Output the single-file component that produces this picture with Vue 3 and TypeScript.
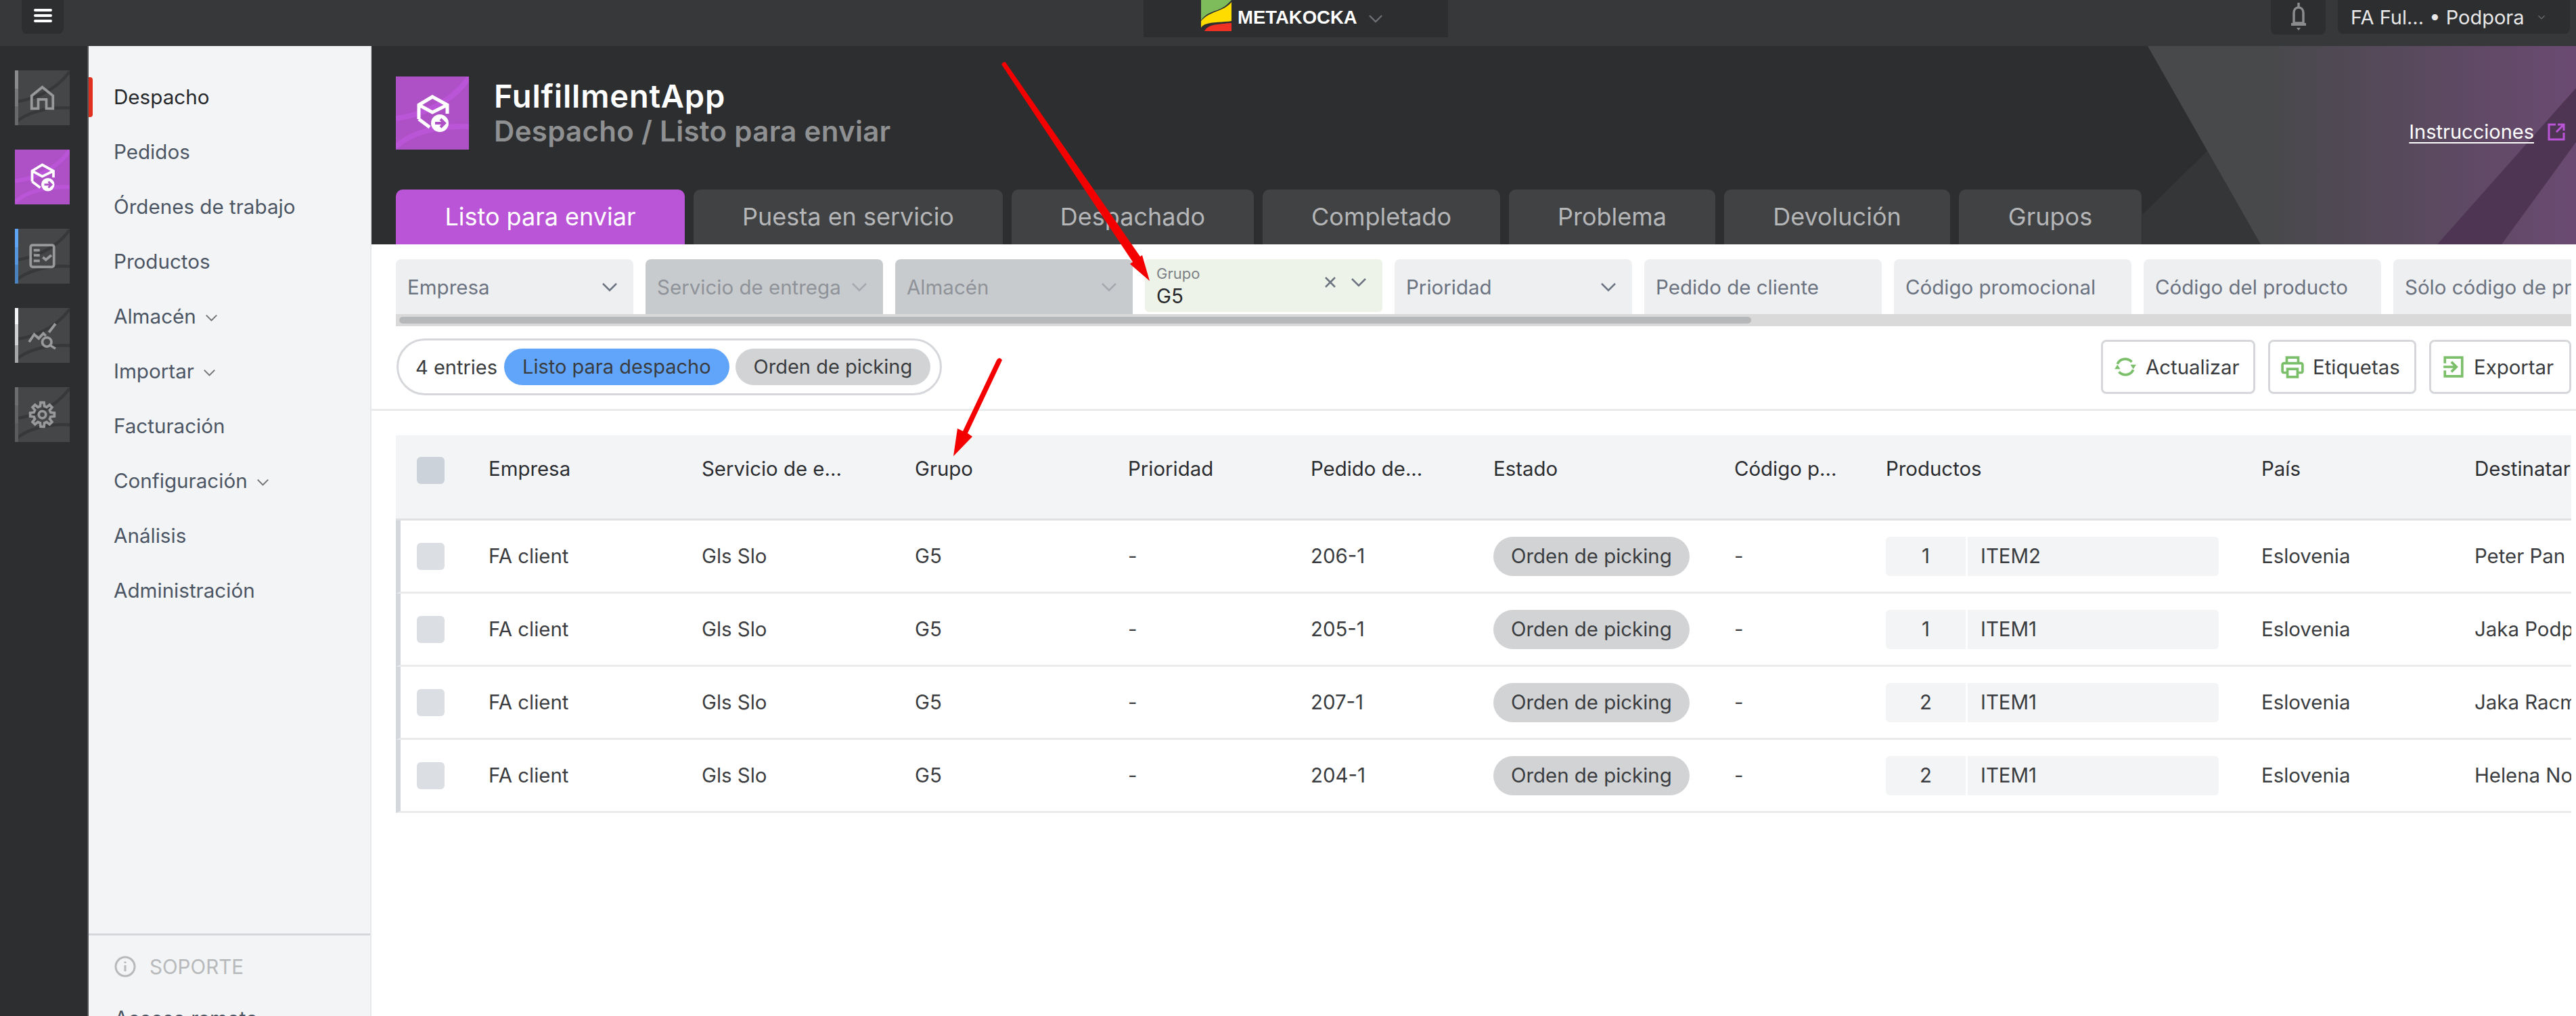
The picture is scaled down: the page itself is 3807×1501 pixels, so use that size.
<script setup lang="ts">
interface Tile {
  name: string;
  active?: boolean;
  strip: string;
}

const tiles: Tile[] = [
  { name: "home", strip: "linear-gradient(180deg, #8a8b8c 0 33%, #777879 33% 66%, #68696a 66%)" },
  { name: "box", active: true, strip: "transparent" },
  { name: "tasks", strip: "linear-gradient(180deg, #5ea6f5 0 33%, #5596de 33% 66%, #4a82c0 66%)" },
  { name: "chart", strip: "linear-gradient(180deg, #f4f4f4 0 30%, #cfd0d1 30% 68%, #a5a6a7 68%)" },
  { name: "gear", strip: "linear-gradient(180deg, #6c6d6e 0 33%, #626364 33% 66%, #5a5b5c 66%)" },
];

const menu = [
  { label: "Despacho", active: true },
  { label: "Pedidos" },
  { label: "Órdenes de trabajo" },
  { label: "Productos" },
  { label: "Almacén", sub: true },
  { label: "Importar", sub: true },
  { label: "Facturación" },
  { label: "Configuración", sub: true },
  { label: "Análisis" },
  { label: "Administración" },
];

const tabs = [
  { label: "Listo para enviar", width: 427 },
  { label: "Puesta en servicio", width: 457 },
  { label: "Despachado", width: 358 },
  { label: "Completado", width: 351 },
  { label: "Problema", width: 305 },
  { label: "Devolución", width: 334 },
  { label: "Grupos", width: 270 },
];

const filters = [
  { label: "Empresa", chevron: true },
  { label: "Servicio de entrega", chevron: true, disabled: true },
  { label: "Almacén", chevron: true, disabled: true },
  { label: "Grupo", value: "G5", chevron: true },
  { label: "Prioridad", chevron: true },
  { label: "Pedido de cliente" },
  { label: "Código promocional" },
  { label: "Código del producto" },
  { label: "Sólo código de producto" },
];

const columns = [
  "Empresa",
  "Servicio de e...",
  "Grupo",
  "Prioridad",
  "Pedido de...",
  "Estado",
  "Código p...",
  "Productos",
  "País",
  "Destinatario",
];

const rows = [
  { order: "206-1", qty: 1, item: "ITEM2", to: "Peter Pan" },
  { order: "205-1", qty: 1, item: "ITEM1", to: "Jaka Podpora" },
  { order: "207-1", qty: 2, item: "ITEM1", to: "Jaka Racman" },
  { order: "204-1", qty: 2, item: "ITEM1", to: "Helena Novak" },
];

// gear outline for the settings tile
const gearPath = (() => {
  const teeth = 8;
  const pts: string[] = [];
  for (let i = 0; i < teeth; i++) {
    const a = (i / teeth) * Math.PI * 2;
    const step = (Math.PI * 2) / teeth;
    const at = (r: number, t: number) =>
      `${(54 + r * Math.cos(t)).toFixed(1)} ${(54 + r * Math.sin(t)).toFixed(1)}`;
    pts.push(at(17, a - step * 0.32), at(24, a - step * 0.18), at(24, a + step * 0.18), at(17, a + step * 0.32));
  }
  return "M" + pts.join("L") + "Z";
})();
</script>

<template>
  <div class="page">
    <header class="topbar">
      <button class="burger">
        <span></span><span></span><span></span>
      </button>
      <div class="brand">
        <svg class="brand-logo" viewBox="0 0 45 46">
          <rect width="45" height="46" fill="#2d2e30" />
          <path d="M0 0H45V0C38 8 32 12 24 15C14 18 5 22 0 30Z" fill="#7dbb5b" />
          <path d="M0 31C6 24 14 20 25 16C33 13 40 9 45 3V31C34 33 16 32 6 36C3 37 1 39 0 41Z" fill="#ffdc00" />
          <path d="M5 46C8 40 14 37 24 36C32 35 40 34 45 34V46Z" fill="#ee3124" />
        </svg>
        <span class="brand-name">METAKOCKA</span>
        <svg class="chev brand-chev" viewBox="0 0 22 14"><path d="M1 2L11 12L21 2" /></svg>
      </div>
      <button class="bell">
        <svg viewBox="0 0 30 50" width="30" height="50">
          <path d="M15 4V10M8 34V19C8 14 11 11 15 11C19 11 22 14 22 19V34Z" fill="none" stroke="#8b8c8d" stroke-width="3.5" />
          <path d="M4 34H26V38H4ZM12 41H18L15 45Z" fill="#8b8c8d" />
        </svg>
      </button>
      <div class="user">
        <span>FA Ful... • Podpora</span>
        <svg class="chev user-chev" viewBox="0 0 22 14"><path d="M1 2L11 12L21 2" /></svg>
      </div>
    </header>

    <div class="body">
      <nav class="rail">
        <div v-for="t in tiles" :key="t.name" class="tile" :class="{ 'tile-active': t.active }">
          <i class="tile-strip" :style="{ background: t.strip }"></i>
          <svg viewBox="0 0 108 108" preserveAspectRatio="none">
            <path class="swoosh" d="M0 62C30 58 78 44 108 2" />
            <path class="swoosh" d="M0 104C20 84 60 72 108 74" />
            <g v-if="t.name === 'home'" class="glyph">
              <path d="M33 75V50L54 33L75 50V75H62V57H46V75Z" />
            </g>
            <g v-else-if="t.name === 'box'" class="glyph glyph-white">
              <path d="M34 63V42L54 30L76 42V55M34 42L54 53L76 42M34 63L50 75" />
              <circle class="dot" cx="65" cy="69" r="13" />
              <path class="dot-arrow" d="M58 69H71M66 63L72 69L66 75" />
            </g>
            <g v-else-if="t.name === 'tasks'" class="glyph">
              <rect x="31" y="32" width="46" height="43" rx="4" />
              <path d="M37 42H49M37 52H49M37 63H49M55 56L61 61L72 52" />
            </g>
            <g v-else-if="t.name === 'chart'" class="glyph">
              <path d="M28 67L38 52L47 60L56 50L61 55M67 48L80 31" />
              <circle cx="63" cy="67" r="9" />
              <path d="M70 74L80 80" />
            </g>
            <g v-else class="glyph">
              <path :d="gearPath" />
              <circle cx="54" cy="54" r="7" />
            </g>
          </svg>
        </div>
      </nav>

      <aside class="sidebar">
        <ul class="menu">
          <li v-for="m in menu" :key="m.label" class="menu-item" :class="{ 'menu-active': m.active }">
            {{ m.label }}
            <svg v-if="m.sub" class="chev menu-chev" viewBox="0 0 22 14"><path d="M1 2L11 12L21 2" /></svg>
          </li>
        </ul>
        <div class="support">
          <div class="support-title">
            <svg viewBox="0 0 32 32" width="32" height="32">
              <circle cx="16" cy="16" r="14" fill="none" stroke="#b7b9bb" stroke-width="3" />
              <path d="M16 14V23M16 8.5V11" stroke="#b7b9bb" stroke-width="3" />
            </svg>
            SOPORTE
          </div>
          <div class="support-link">Acceso remoto</div>
        </div>
      </aside>

      <main class="main">
        <section class="hero">
          <svg class="hero-art" viewBox="0 0 700 293" preserveAspectRatio="none">
            <defs>
              <linearGradient id="fade" x1="0" y1="0" x2="1" y2="0">
                <stop offset="0.28" stop-color="#48494b" />
                <stop offset="1" stop-color="#6b4a72" />
              </linearGradient>
            </defs>
            <path d="M155 155L59 249V293H234Z" fill="#353638" />
            <path d="M67 0H700V293H234Z" fill="url(#fade)" />
            <path d="M700 62L495 293H590L700 142Z" fill="#4e3553" />
          </svg>
          <div class="hero-head">
            <div class="hero-logo">
              <svg viewBox="0 0 108 108">
                <path class="swoosh-p" d="M0 62C30 58 78 44 108 2" />
                <path class="swoosh-p" d="M0 104C20 84 60 72 108 74" />
                <g class="glyph glyph-white">
                  <path d="M34 63V42L54 30L76 42V55M34 42L54 53L76 42M34 63L50 75" />
                  <circle class="dot" cx="65" cy="69" r="13" />
                  <path class="dot-arrow" d="M58 69H71M66 63L72 69L66 75" />
                </g>
              </svg>
            </div>
            <div class="hero-text">
              <h1>FulfillmentApp</h1>
              <h2>Despacho / Listo para enviar</h2>
            </div>
            <a class="guide">
              <span>Instrucciones</span>
              <svg viewBox="0 0 26 26" width="26" height="26">
                <path d="M12 2H2V24H24V14M13 13L24 2M15 2H24V11" fill="none" stroke="#bb55d7" stroke-width="3" />
              </svg>
            </a>
          </div>
          <div class="tabs">
            <div
              v-for="(tab, i) in tabs"
              :key="tab.label"
              class="tab"
              :class="{ 'tab-active': i === 0 }"
              :style="{ width: tab.width + 'px' }"
            >
              {{ tab.label }}
            </div>
          </div>
        </section>

        <section class="filter-wrap">
          <div class="filters">
            <div
              v-for="f in filters"
              :key="f.label"
              class="filter"
              :class="{ 'filter-off': f.disabled, 'filter-set': f.value }"
            >
              <template v-if="f.value">
                <div class="filter-stack">
                  <small>{{ f.label }}</small>
                  <b>{{ f.value }}</b>
                </div>
                <svg class="clear" viewBox="0 0 18 18"><path d="M2 2L16 16M16 2L2 16" /></svg>
                <svg class="chev filter-chev set-chev" viewBox="0 0 22 14"><path d="M1 2L11 12L21 2" /></svg>
              </template>
              <template v-else>
                <span class="filter-label">{{ f.label }}</span>
                <svg v-if="f.chevron" class="chev filter-chev" viewBox="0 0 22 14"><path d="M1 2L11 12L21 2" /></svg>
              </template>
            </div>
          </div>
          <div class="scroll-track"><div class="scroll-thumb"></div></div>
        </section>

        <section class="toolbar">
          <div class="counts">
            <span class="count-text">4 entries</span>
            <span class="chip chip-blue">Listo para despacho</span>
            <span class="chip chip-grey">Orden de picking</span>
          </div>
          <div class="actions">
            <button class="action action-refresh">
              <svg viewBox="0 0 32 32" width="34" height="34" class="green">
                <path d="M5 12C8 5 18 2 25 9M27 20C24 27 14 30 7 23" />
                <path class="fill" d="M1 19L9 19L5 13ZM23 13L31 13L27 19Z" />
              </svg>
              Actualizar
            </button>
            <button class="action action-print">
              <svg viewBox="0 0 32 32" width="34" height="34" class="green">
                <path d="M8 11V3H24V11M8 24H4C3 24 2 23 2 22V13C2 12 3 11 4 11H28C29 11 30 12 30 13V22C30 23 29 24 28 24H24M9 19H23V30H9Z" />
              </svg>
              Etiquetas
            </button>
            <button class="action action-export">
              <svg viewBox="0 0 32 32" width="34" height="34" class="green">
                <path d="M4 11V3H28V29H4V21M2 16H19M13 9L20 16L13 23" />
              </svg>
              Exportar
            </button>
          </div>
        </section>

        <section class="table">
          <div class="tr thead">
            <div class="cell-check"><i class="check check-head"></i></div>
            <div v-for="c in columns" :key="c" class="th">{{ c }}</div>
          </div>
          <div v-for="r in rows" :key="r.order" class="tr tbody">
            <div class="cell-check"><i class="check"></i></div>
            <div class="td">FA client</div>
            <div class="td">Gls Slo</div>
            <div class="td">G5</div>
            <div class="td">-</div>
            <div class="td">{{ r.order }}</div>
            <div class="td"><span class="status">Orden de picking</span></div>
            <div class="td">-</div>
            <div class="td">
              <div class="product">
                <span class="qty">{{ r.qty }}</span>
                <span class="item">{{ r.item }}</span>
              </div>
            </div>
            <div class="td">Eslovenia</div>
            <div class="td">{{ r.to }}</div>
          </div>
        </section>
      </main>
    </div>

    <!-- red annotation arrows drawn over the screenshot -->
    <svg class="arrows" viewBox="0 0 3807 1501">
      <path d="M1480 95Q1483 90 1486 92L1685 379L1688 377L1699 415L1670 390L1674 387Z" fill="#f40000" />
      <path d="M1473 532Q1477 526 1481 532L1430 640L1437 645L1409 674L1415 633L1423 637Z" fill="#f40000" />
    </svg>
  </div>
</template>

<style>
html,
body {
  margin: 0;
  background: #fff;
  overflow: hidden;
}
</style>

<style scoped>
.page {
  position: relative;
  width: 3807px;
  height: 1501px;
  overflow: hidden;
  font-family: Inter, "Noto Sans", sans-serif;
  font-size: 29.4px;
  color: #3a3c40;
}

.topbar {
  height: 68px;
  background: #37383a;
  display: flex;
  align-items: flex-start;
  padding: 0 9px 0 32px;
  box-sizing: border-box;
}

.burger {
  width: 62px;
  height: 50px;
  background: #2d2e30;
  border: 0;
  border-radius: 0 0 8px 8px;
  display: flex;
  flex-direction: column;
  align-items: center;
  gap: 4px;
  padding: 13px 0 0;
}

.burger span {
  width: 27px;
  height: 4px;
  border-radius: 2px;
  background: #fff;
}

.brand {
  width: 450px;
  height: 55px;
  margin-left: 1596px;
  background: #2d2e30;
  display: flex;
  align-items: flex-start;
  padding-left: 85px;
  box-sizing: border-box;
  color: #fff;
}

.brand-logo {
  width: 45px;
  height: 46px;
  flex-shrink: 0;
}

.brand-name {
  margin-left: 9px;
  font-family: "Liberation Sans", sans-serif;
  font-weight: 700;
  font-size: 27.5px;
  line-height: 46px;
  padding-top: 3px;
  white-space: nowrap;
}

.chev {
  fill: none;
  stroke: #6f7174;
  stroke-width: 2.5;
}

.brand-chev {
  width: 20px;
  height: 13px;
  margin: 21px 0 0 17px;
}

.bell {
  width: 81px;
  height: 51px;
  margin-left: 1216px;
  background: #2d2e30;
  border: 0;
  border-radius: 0 0 8px 8px;
  padding: 0;
  display: flex;
  justify-content: center;
  align-items: flex-start;
}

.user {
  width: 343px;
  height: 50px;
  margin-left: 18px;
  background: #2d2e30;
  border-radius: 0 0 8px 8px;
  display: flex;
  align-items: center;
  padding-left: 19px;
  box-sizing: border-box;
  color: #e8e8e8;
  font-size: 29px;
  white-space: nowrap;
}

.user-chev {
  width: 10px;
  height: 7px;
  margin-left: 20px;
}

.body {
  display: flex;
  height: 1433px;
}

.rail {
  width: 131px;
  flex-shrink: 0;
  box-sizing: border-box;
  background: #2d2e30;
  border-right: 2px solid #55565a;
  padding: 36px 0 0 22px;
  display: flex;
  flex-direction: column;
  gap: 36px;
}

.tile {
  position: relative;
  width: 81px;
  height: 81px;
  background: #454647;
  overflow: hidden;
}

.tile svg {
  display: block;
  width: 100%;
  height: 100%;
}

.tile-strip {
  position: absolute;
  left: 0;
  top: 0;
  bottom: 0;
  width: 5px;
}

.tile-active {
  background: #ae50c6;
}

.swoosh {
  fill: none;
  stroke: #37383a;
  stroke-width: 6;
}

.tile-active .swoosh,
.swoosh-p {
  fill: none;
  stroke: #bb55d7;
  stroke-width: 8;
}

.glyph {
  fill: none;
  stroke: #98999a;
  stroke-width: 5;
}

.glyph-white {
  stroke: #fff;
}

.dot {
  fill: #fff;
  stroke: none;
}

.dot-arrow {
  stroke: #ae50c6;
  stroke-width: 4;
}

.sidebar {
  width: 418px;
  flex-shrink: 0;
  box-sizing: border-box;
  background: #f3f4f6;
  border-right: 2px solid #e7e8ea;
  display: flex;
  flex-direction: column;
  overflow: hidden;
  font-size: 29.6px;
}

.menu {
  list-style: none;
  margin: 0;
  padding: 35px 0 0;
  flex: 1;
}

.menu-item {
  position: relative;
  height: 81px;
  line-height: 81px;
  padding-left: 37px;
  color: #4b5563;
  white-space: nowrap;
}

.menu-active {
  color: #25272b;
}

.menu-active::before {
  content: "";
  position: absolute;
  left: 0;
  top: 11px;
  bottom: 11px;
  width: 6px;
  border-radius: 0 4px 4px 0;
  background: #e0301e;
}

.menu-chev {
  width: 17px;
  height: 11px;
  margin-left: 6px;
  vertical-align: 3px;
}

.support {
  height: 122px;
  flex-shrink: 0;
  box-sizing: border-box;
  border-top: 3px solid #d5d7da;
  padding: 30px 0 0 38px;
}

.support-title {
  display: flex;
  align-items: center;
  gap: 20px;
  height: 32px;
  color: #b7b9bb;
}

.support-link {
  margin-top: 42px;
  color: #4b5563;
}

.main {
  flex: 1;
  min-width: 0;
  display: flex;
  flex-direction: column;
}

.hero {
  position: relative;
  height: 293px;
  background: #2d2e30;
  box-sizing: border-box;
  padding: 45px 0 0 36px;
  display: flex;
  flex-direction: column;
  justify-content: space-between;
  overflow: hidden;
}

.hero-art {
  position: absolute;
  top: 0;
  right: 0;
  width: 700px;
  height: 293px;
}

.hero-head {
  position: relative;
  display: flex;
  height: 108px;
  padding-right: 16px;
}

.hero-logo {
  width: 108px;
  height: 108px;
  background: #ae50c6;
}

.hero-logo svg {
  display: block;
}

.hero-text {
  flex: 1;
  margin-left: 37px;
}

h1 {
  margin: 0;
  font-size: 47px;
  letter-spacing: 0.8px;
  line-height: 54px;
  padding-top: 2px;
  font-weight: 600;
  color: #fff;
}

h2 {
  margin: 0;
  font-size: 42px;
  letter-spacing: 0.3px;
  line-height: 50px;
  font-weight: 600;
  color: #8f9092;
}

.guide {
  display: flex;
  align-items: center;
  align-self: flex-start;
  gap: 20px;
  margin-top: 64px;
  color: #fff;
  font-size: 29px;
}

.guide span {
  text-decoration: underline;
  text-underline-offset: 5px;
}

.tabs {
  position: relative;
  display: flex;
  gap: 13px;
}

.tab {
  height: 81px;
  line-height: 81px;
  text-align: center;
  background: #414244;
  color: #b5b6b8;
  border-radius: 10px 10px 0 0;
  font-size: 36px;
  flex-shrink: 0;
}

.tab-active {
  background: #bb55d7;
  color: #fff;
}

.filter-wrap {
  padding: 22px 7px 0 36px;
}

.filters {
  display: flex;
  gap: 18px;
  overflow: hidden;
  height: 81px;
  font-size: 29.5px;
}

.filter {
  width: 351px;
  height: 81px;
  flex-shrink: 0;
  box-sizing: border-box;
  display: flex;
  align-items: center;
  padding: 0 24px 0 17px;
  background: #eeeff1;
  color: #6b7280;
  border-radius: 8px 8px 0 0;
  white-space: nowrap;
}

.filter-off {
  background: #c8cbce;
  color: #8f9399;
}

.filter-set {
  height: 78px;
  background: #edf3e8;
  border-radius: 6px;
}

.filter-label {
  flex: 1;
}

.filter-stack {
  flex: 1;
  display: flex;
  flex-direction: column;
}

.filter-stack small {
  font-size: 22px;
  line-height: 30px;
  color: #7c8187;
}

.filter-stack b {
  font-weight: 400;
  line-height: 36px;
  color: #26282c;
}

.clear {
  width: 18px;
  height: 18px;
  fill: none;
  stroke: #6b7280;
  stroke-width: 2.5;
  margin: -10px 22px 0 0;
}

.filter-chev {
  width: 22px;
  height: 14px;
  stroke: #6b7280;
}

.set-chev {
  margin: -10px 0 0 0;
}

.filter-off .filter-chev {
  stroke: #a5a9ae;
}

.scroll-track {
  height: 18px;
  background: #d9d9d9;
  padding: 4px 0 4px 5px;
  box-sizing: border-box;
}

.scroll-thumb {
  width: 1998px;
  height: 10px;
  background: #b5b7b9;
  border-radius: 5px;
}

.toolbar {
  height: 125px;
  flex-shrink: 0;
  box-sizing: border-box;
  padding: 18px 7px 0 37px;
  border-bottom: 3px solid #eaebec;
  display: flex;
  justify-content: space-between;
  align-items: flex-start;
}

.counts {
  height: 84px;
  box-sizing: border-box;
  border: 3px solid #d5d7da;
  border-radius: 42px;
  display: flex;
  align-items: center;
  padding: 0 14px 0 25px;
  gap: 9px;
  font-size: 29px;
}

.count-text {
  margin-right: 1px;
}

.chip {
  height: 54px;
  line-height: 54px;
  border-radius: 27px;
  padding: 0 27px;
  white-space: nowrap;
}

.chip-blue {
  background: #60a5fa;
}

.chip-grey {
  background: #d1d3d5;
}

.actions {
  display: flex;
  gap: 19px;
  padding-top: 2px;
}

.action {
  height: 80px;
  box-sizing: border-box;
  background: #fff;
  border: 3px solid #d5d7da;
  border-radius: 8px;
  display: flex;
  align-items: center;
  gap: 13px;
  padding: 0 0 0 16px;
  font: inherit;
  color: inherit;
}

.action-refresh {
  width: 228px;
}

.action-print {
  width: 219px;
}

.action-export {
  width: 210px;
}

.green {
  fill: none;
  stroke: #7cbf6a;
  stroke-width: 3.5;
}

.green .fill {
  fill: #7cbf6a;
  stroke: none;
}

.table {
  margin: 36px 7px 0 36px;
  overflow: hidden;
}

.tr {
  display: grid;
  grid-template-columns: 137px 315px 315px 315px 270px 270px 356px 224px 555px 315px 200px;
  width: max-content;
}

.thead {
  height: 126px;
  background: #f3f4f6;
  border-bottom: 3px solid #dfe1e4;
  box-sizing: border-box;
}

.th {
  padding-top: 34px;
  line-height: 32px;
  font-weight: 400;
  color: #2b2d31;
  white-space: nowrap;
}

.tbody {
  grid-template-columns: 130px 315px 315px 315px 270px 270px 356px 224px 555px 315px 200px;
  height: 108px;
  box-sizing: border-box;
  border-left: 7px solid #d4d7db;
  border-bottom: 3px solid #eaebec;
  align-items: center;
}

.cell-check {
  padding-left: 31px;
}

.tbody .cell-check {
  padding-left: 24px;
}

.thead .cell-check {
  padding-top: 32px;
}

.check {
  display: block;
  width: 41px;
  height: 40px;
  border-radius: 6px;
  background: #dbdfe3;
}

.check-head {
  background: #cbd2d9;
}

.td {
  white-space: nowrap;
}

.status {
  display: inline-block;
  height: 58px;
  line-height: 58px;
  padding: 0 26px;
  border-radius: 29px;
  background: #d1d3d5;
}

.product {
  display: grid;
  grid-template-columns: 118px 371px;
  gap: 3px;
  height: 58px;
  line-height: 58px;
}

.qty,
.item {
  background: #f3f4f6;
}

.qty {
  text-align: center;
  border-radius: 6px 0 0 6px;
}

.item {
  padding-left: 19px;
  border-radius: 0 6px 6px 0;
}

.arrows {
  position: absolute;
  inset: 0;
  width: 3807px;
  height: 1501px;
  pointer-events: none;
}
</style>
